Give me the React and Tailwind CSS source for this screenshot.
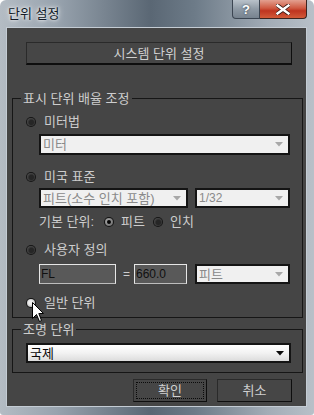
const font = "font-['Liberation_Sans','Noto_Sans_CJK_KR',sans-serif]";

function Radio({ state = "off" }) {
  if (state === "on") {
    return (
      <span className="flex h-[10px] w-[10px] shrink-0 items-center justify-center rounded-full bg-[#141414]">
        <span className="flex h-[8px] w-[8px] items-center justify-center rounded-full bg-[radial-gradient(circle_at_40%_40%,#9a9a9a_30%,#5c5c5c_90%)]">
          <span className="h-[4px] w-[4px] rounded-full bg-[#050505]" />
        </span>
      </span>
    );
  }
  if (state === "hover") {
    return (
      <span className="flex h-[10px] w-[10px] shrink-0 items-center justify-center rounded-full bg-[#141414]">
        <span className="h-[8px] w-[8px] rounded-full bg-[radial-gradient(circle_at_45%_45%,#f0f0f0_30%,#a8a8a8_85%)]" />
      </span>
    );
  }
  return (
    <span className="flex h-[10px] w-[10px] shrink-0 items-center justify-center rounded-full bg-[#161616]">
      <span className="h-[8px] w-[8px] rounded-full bg-[radial-gradient(circle_at_55%_55%,#262626_35%,#5e5e5e_90%)]" />
    </span>
  );
}

function Arrow({ color }) {
  return (
    <svg width="8" height="5" viewBox="0 0 8 5" className="shrink-0">
      <path d="M0 0 H8 L4 4.5 Z" fill={color} />
    </svg>
  );
}

function Combo({ text, className = "", textColor = "text-[#8a8a8a]", arrow = "#a8a8a8", bg = "bg-[#f0f0f0]", size = "text-[13px]" }) {
  return (
    <div
      className={`flex items-center justify-between border-2 border-[#141414] ${bg} pl-[2px] pr-[5px] ${className}`}
    >
      <span className={`${size} leading-[15px] ${textColor}`}>{text}</span>
      <Arrow color={arrow} />
    </div>
  );
}

function RadioRow({ label, state, className = "" }) {
  return (
    <div className={`flex h-[16px] items-center gap-[8px] pl-[13px] ${className}`}>
      <Radio state={state} />
      <span className="text-[13px] leading-[16px] text-[#cdcdcd]">{label}</span>
    </div>
  );
}

function Group({ label, className = "", children }) {
  return (
    <div className={`relative ml-[5px] w-[291px] border border-[#161616] ${className}`}>
      <span className="absolute -top-[8px] left-[8px] bg-[#454545] px-[2px] text-[13px] leading-[15px] text-[#cdcdcd]">
        {label}
      </span>
      {children}
    </div>
  );
}

function Button({ label, focused, className = "" }) {
  return (
    <div
      className={`relative flex h-[23px] items-center justify-center border border-[#2a2a2a] border-b-[#0e0e0e] border-r-[#0e0e0e] bg-[#464646] text-[13px] text-[#d0d0d0] ${className}`}
    >
      {focused && <span className="absolute inset-[2px] border border-dotted border-[#0a0a0a]" />}
      <span className="relative leading-[15px]">{label}</span>
    </div>
  );
}

export default function App() {
  return (
    <div
      className={`${font} relative flex h-[415px] w-[314px] flex-col overflow-hidden rounded-t-[6px] rounded-b-[3px] bg-[linear-gradient(90deg,#b4bcc4_0%,#98a3ae_18%,#5a6774_48%,#6d7b88_62%,#a2acb6_85%,#b8c0c8_100%)]`}
    >
      {/* title bar */}
      <div className="flex h-[27px] items-start justify-between pl-[8px]">
        <span className="mt-[6px] text-[13px] leading-[15px] text-[#121a28] [text-shadow:0_0_6px_#ffffff,0_0_3px_#ffffff]">
          단위 설정
        </span>
        <div className="mr-[7px] flex">
          <div className="flex h-[19px] w-[28px] items-center justify-center rounded-bl-[4px] border border-t-0 border-[#3c4652] bg-[linear-gradient(180deg,#b9c2ca_0%,#8f9aa5_50%,#77838f_100%)] text-[13px] font-bold leading-none text-white [text-shadow:0_0_2px_#20303c]">
            ?
          </div>
          <div className="flex h-[19px] w-[47px] items-center justify-center rounded-br-[4px] border border-l-0 border-t-0 border-[#3c2420] bg-[linear-gradient(180deg,#e3a090_0%,#cf5a42_45%,#bf3420_60%,#d25a38_100%)]">
            <svg width="14" height="11" viewBox="0 0 14 11">
              <path
                d="M1 1 L13 10 M13 1 L1 10"
                stroke="#3a1a14"
                strokeWidth="4"
                strokeLinecap="square"
              />
              <path
                d="M1.5 1.5 L12.5 9.5 M12.5 1.5 L1.5 9.5"
                stroke="#ffffff"
                strokeWidth="2.4"
                strokeLinecap="square"
              />
            </svg>
          </div>
        </div>
      </div>

      {/* client area */}
      <div className="ml-[6px] flex h-[380px] w-[301px] flex-col border border-[#c4ccd4] bg-[#454545]">
        <Button label="시스템 단위 설정" className="ml-[19px] mt-[14px] h-[22px] w-[266px] border-b-2" />

        <Group label="표시 단위 배율 조정" className="mt-[33px] h-[220px]">
          <div className="flex flex-col pt-[15px]">
            <RadioRow label="미터법" />
            <Combo text="미터" className="ml-[26px] mt-[4px] h-[21px] w-[251px]" />

            <RadioRow label="미국 표준" className="mt-[14px]" />
            <div className="ml-[26px] mt-[3px] flex gap-[7px]">
              <Combo text="피트(소수 인치 포함)" className="h-[20px] w-[149px]" />
              <Combo text="1/32" size="text-[12px]" className="h-[20px] w-[95px]" />
            </div>

            <div className="ml-[26px] mt-[6px] flex h-[16px] items-center text-[13px] leading-[16px] text-[#cdcdcd]">
              <span>기본 단위:</span>
              <span className="ml-[10px]">
                <Radio state="on" />
              </span>
              <span className="ml-[7px]">피트</span>
              <span className="ml-[8px]">
                <Radio />
              </span>
              <span className="ml-[7px]">인치</span>
            </div>

            <RadioRow label="사용자 정의" className="mt-[12px]" />
            <div className="ml-[26px] mt-[6px] flex h-[20px] items-center">
              <div className="flex h-[20px] w-[77px] items-center border border-[#e6e6e6] border-b-[#bdbdbd] bg-[#595959] pl-[1px] text-[12px] leading-[14px] text-[#101010]">
                FL
              </div>
              <span className="ml-[7px] w-[11px] text-[12px] leading-[14px] text-[#cdcdcd]">=</span>
              <div className="flex h-[20px] w-[53px] items-center border border-[#e6e6e6] border-b-[#bdbdbd] bg-[#595959] pl-[1px] text-[12px] leading-[14px] text-[#101010]">
                660.0
              </div>
              <Combo text="피트" className="ml-[8px] h-[20px] w-[95px]" />
            </div>

            <RadioRow label="일반 단위" state="hover" className="mt-[11px]" />
          </div>
        </Group>

        <Group label="조명 단위" className="mt-[11px] h-[44px]">
          <div className="pl-[13px] pt-[13px]">
            <Combo
              text="국제"
              className="h-[20px] w-[265px]"
              textColor="text-[#0a0a0a]"
              arrow="#0a0a0a"
              bg="bg-[linear-gradient(180deg,#ffffff_0%,#f2f2f2_50%,#dcdcdc_100%)]"
            />
          </div>
        </Group>

        <div className="ml-[126px] mt-[6px] flex gap-[10px]">
          <Button label="확인" focused className="w-[74px]" />
          <Button label="취소" className="w-[75px]" />
        </div>
      </div>

      {/* mouse pointer */}
      <svg
        className="absolute left-[32px] top-[302px]"
        width="13"
        height="21"
        viewBox="0 0 13 21"
      >
        <path
          d="M0.5 0.5 L0.5 16.5 L4.5 12.5 L7.5 19.5 L9.5 18.5 L6.8 11.5 L11.5 11.5 Z"
          fill="#ffffff"
          stroke="#000000"
          strokeWidth="1"
          strokeLinejoin="miter"
        />
      </svg>
    </div>
  );
}
